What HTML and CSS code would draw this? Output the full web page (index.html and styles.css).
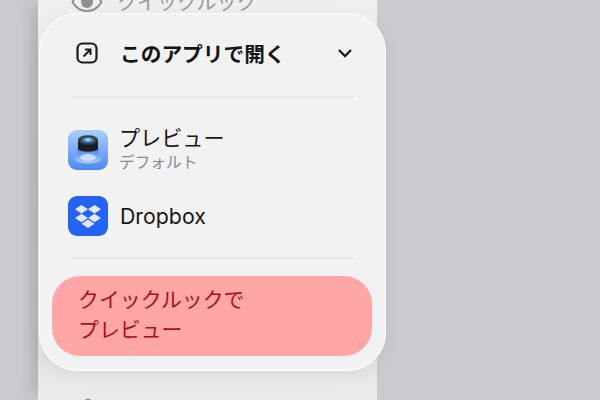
FILE: index.html
```html
<!DOCTYPE html>
<html lang="ja">
<head>
<meta charset="utf-8">
<title>このアプリで開く</title>
<link rel="stylesheet" href="styles.css">
</head>
<body>
<div class="sheet">
  <div class="sheet-row top">
    <svg class="eye" viewBox="0 0 32 22" width="32" height="22"><path d="M1.500 11C5 5 10 2 16 2s11 3 14.500 9C27 17 22 20 16 20S5 17 1.500 11Z" fill="none" stroke="#8f8f8f" stroke-width="2"/><circle cx="16" cy="11" r="6" fill="#8f8f8f"/></svg>
    <span>クイックルック</span>
  </div>
  <div class="sheet-row bottom">
    <svg viewBox="0 0 24 24" width="24" height="24"><circle cx="12" cy="4" r="3.500" fill="#8f8f8f"/></svg>
  </div>
</div>
<div class="card">
  <div class="head">
    <svg class="open" viewBox="0 0 22 22" width="22" height="22"><rect x="1.500" y="1.500" width="19" height="19" rx="5" fill="none" stroke="#1a1a1a" stroke-width="2.200"/><path d="M7.500 14.500 14 8M9 7.500h5.500V13" fill="none" stroke="#1a1a1a" stroke-width="2"/></svg>
    <span class="title">このアプリで開く</span>
    <svg class="chev" viewBox="0 0 16 10" width="16" height="10"><path d="M2 2l6 6 6-6" fill="none" stroke="#1a1a1a" stroke-width="2.300"/></svg>
  </div>
  <div class="rule"></div>
  <div class="apps">
    <div class="app">
      <svg class="icon" viewBox="0 0 40 40" width="40" height="40">
        <defs>
          <linearGradient id="pv" x1="0" y1="0" x2="0" y2="1"><stop offset="0" stop-color="#a8d0fd"/><stop offset="1" stop-color="#4f86f5"/></linearGradient>
          <linearGradient id="gl" x1="0" y1="0" x2="0" y2="1"><stop offset="0" stop-color="#3f7fe6"/><stop offset="1" stop-color="#a9cdfb"/></linearGradient>
        </defs>
        <rect width="40" height="40" rx="9" fill="url(#pv)"/>
        <path d="M10 18 30 18 33 29c0 3-6 4.500-13 4.500S7 32 7 29Z" fill="url(#gl)"/>
        <ellipse cx="20" cy="27.500" rx="8" ry="3.500" fill="#c6dcfa"/>
        <path d="M10 10h20v9c-2 3.500-18 3.500-20 0Z" fill="#1c1d22"/>
        <ellipse cx="20" cy="10" rx="10" ry="4.800" fill="#3a3c42"/>
        <ellipse cx="20" cy="10" rx="6.500" ry="3" fill="#2f7fc4"/>
        <ellipse cx="20" cy="9.700" rx="3.200" ry="1.500" fill="#8fd0f0"/>
      </svg>
      <div class="names">
        <div class="name">プレビュー</div>
        <div class="sub">デフォルト</div>
      </div>
    </div>
    <div class="app">
      <svg class="icon" viewBox="0 0 40 40" width="40" height="40">
        <rect width="40" height="40" rx="9" fill="#2563f5"/>
        <path d="M13.500 9 20 13.200 13.500 17.400 7 13.200ZM26.500 9 33 13.200 26.500 17.400 20 13.200ZM13.500 17.800 20 22 13.500 26.200 7 22ZM26.500 17.800 33 22 26.500 26.200 20 22ZM20 23.500 26.500 27.700 20 32 13.500 27.700Z" fill="#dfe8fd"/>
      </svg>
      <div class="name brand">Dropbox</div>
    </div>
  </div>
  <div class="rule"></div>
  <div class="action">クイックルックで<br>プレビュー</div>
</div>
</body>
</html>
```

FILE: styles.css
```css
* { box-sizing: border-box; }
html, body { margin: 0; height: 100%; }
body {
  width: 600px;
  height: 400px;
  overflow: hidden;
  position: relative;
  background: #cccace;
  font-family: "Inter", "Noto Sans CJK JP", sans-serif;
}
.sheet {
  margin-left: 38px;
  width: 339px;
  height: 400px;
  background: linear-gradient(#efefef, #e4e4e4 90%, #ececec);
  box-shadow: -12px 0 14px -6px rgba(90, 90, 100, .25);
  display: flex;
  flex-direction: column;
  justify-content: space-between;
  overflow: hidden;
}
.sheet-row {
  display: flex;
  align-items: center;
  gap: 14px;
  padding-left: 33px;
  color: #9a9a9a;
  font-size: 20px;
}
.sheet-row.top { margin-top: -13px; }
.sheet-row.bottom { margin-bottom: -22px; padding-left: 38px; }
.card {
  position: absolute;
  left: 39px;
  top: 13px;
  width: 347px;
  height: 358px;
  background: #f2f2f2;
  border: 1px solid #ffffff;
  border-radius: 38px;
  box-shadow: 0 4px 16px rgba(0, 0, 0, .06);
  padding: 0 13px 0 12px;
}
.head {
  height: 82px;
  display: flex;
  align-items: center;
  padding: 0 19px 4px 24px;
  gap: 22px;
}
.title {
  flex: 1;
  font-size: 20.700px;
  font-weight: 700;
  color: #161616;
}
.rule {
  height: 2px;
  margin: 0 18px 0 20px;
  background: #e6e6e6;
}
.apps {
  padding: 32px 16px 21px;
  display: flex;
  flex-direction: column;
  gap: 26px;
}
.app {
  display: flex;
  align-items: center;
  gap: 12px;
  height: 40px;
}
.names { display: flex; flex-direction: column; margin: -1px 0 0 -1px; }
.name { font-size: 21.100px; line-height: 26px; color: #161616; }
.name.brand { font-size: 21.300px; }
.sub { font-size: 15.700px; line-height: 22px; color: #8a8a8a; }
.action {
  margin-top: 17px;
  height: 80px;
  border-radius: 28px;
  background: #fea7a6;
  color: #ae0f14;
  font-size: 20.900px;
  line-height: 30px;
  padding: 9px 26px;
}
```
